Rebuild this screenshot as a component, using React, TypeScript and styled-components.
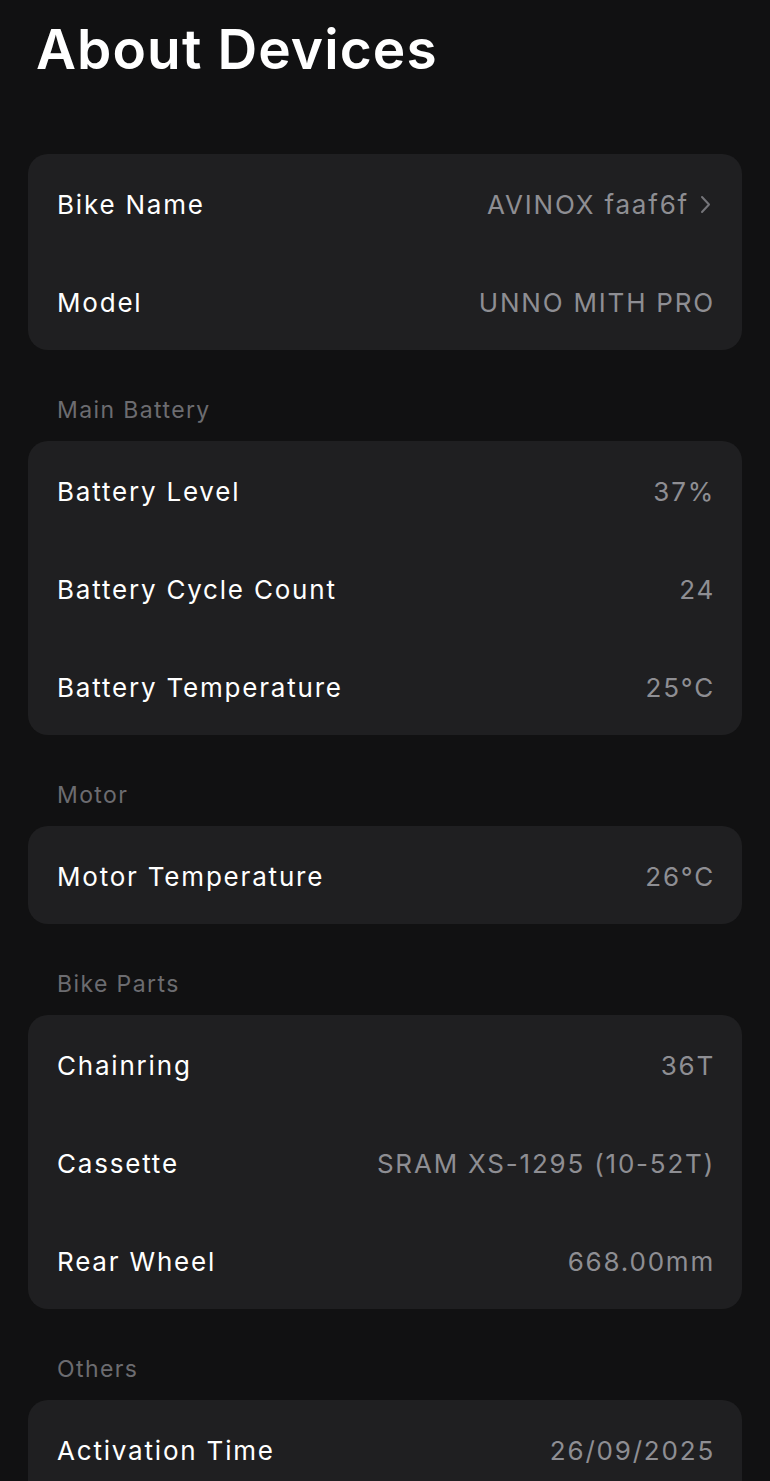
import React from "react";
import styled, { createGlobalStyle } from "styled-components";

const Global = createGlobalStyle`
  html, body { margin: 0; padding: 0; background: #111112; }
  body { font-family: Inter, "Noto Sans", sans-serif; -webkit-font-smoothing: antialiased; }
`;

const Page = styled.div`
  width: 770px;
  min-height: 1481px;
  background: #111112;
  padding: 0 28px 40px;
  box-sizing: border-box;
  overflow: hidden;
`;

const Title = styled.h1`
  margin: 0;
  padding: 14px 0 0 8px;
  height: 140px;
  box-sizing: border-box;
  font-size: 55px;
  line-height: 70px;
  font-weight: 600;
  color: #ffffff;
  letter-spacing: 1.1px;
`;

const Section = styled.section<{ $first?: boolean }>`
  display: flex;
  flex-direction: column;
  margin-top: ${(p) => (p.$first ? "14px" : "46px")};
`;

const SectionLabel = styled.div`
  padding-left: 29px;
  height: 28px;
  line-height: 28px;
  margin-bottom: 17px;
  font-size: 23px;
  color: #6c6c70;
  letter-spacing: 1.4px;
`;

const Card = styled.div`
  background: #1f1f21;
  border-radius: 20px;
  display: flex;
  flex-direction: column;
`;

const Row = styled.div`
  height: 98px;
  display: flex;
  align-items: center;
  justify-content: space-between;
  padding: 2px 29px 0;
  box-sizing: border-box;
`;

const Label = styled.span`
  font-size: 26px;
  color: #ffffff;
  letter-spacing: 1.8px;
`;

const Value = styled.span`
  display: flex;
  align-items: center;
  gap: 11px;
  font-size: 26px;
  color: #8e8e93;
  letter-spacing: 1.8px;
  margin-right: -2px;
`;

const ChevronIcon = styled.svg`
  margin-right: 4px;
  flex: none;
`;

const Chevron = () => (
  <ChevronIcon width="11" height="19" viewBox="0 0 11 19" fill="none">
    <path d="M2 2l7 7.5-7 7.5" stroke="#75757a" strokeWidth="2" strokeLinecap="round" strokeLinejoin="round" />
  </ChevronIcon>
);

type Item = { label: string; value: string; link?: boolean };

const sections: { title?: string; items: Item[] }[] = [
  {
    items: [
      { label: "Bike Name", value: "AVINOX faaf6f", link: true },
      { label: "Model", value: "UNNO MITH PRO" },
    ],
  },
  {
    title: "Main Battery",
    items: [
      { label: "Battery Level", value: "37%" },
      { label: "Battery Cycle Count", value: "24" },
      { label: "Battery Temperature", value: "25°C" },
    ],
  },
  { title: "Motor", items: [{ label: "Motor Temperature", value: "26°C" }] },
  {
    title: "Bike Parts",
    items: [
      { label: "Chainring", value: "36T" },
      { label: "Cassette", value: "SRAM XS-1295 (10-52T)" },
      { label: "Rear Wheel", value: "668.00mm" },
    ],
  },
  { title: "Others", items: [{ label: "Activation Time", value: "26/09/2025" }, { label: "", value: "" }] },
];

export default function App() {
  return (
    <Page>
      <Global />
      <Title>About Devices</Title>
      {sections.map((s, i) => (
        <Section key={i} $first={i === 0}>
          {s.title && <SectionLabel>{s.title}</SectionLabel>}
          <Card>
            {s.items.map((it, j) => (
              <Row key={j}>
                <Label>{it.label}</Label>
                <Value>
                  {it.value}
                  {it.link && <Chevron />}
                </Value>
              </Row>
            ))}
          </Card>
        </Section>
      ))}
    </Page>
  );
}
